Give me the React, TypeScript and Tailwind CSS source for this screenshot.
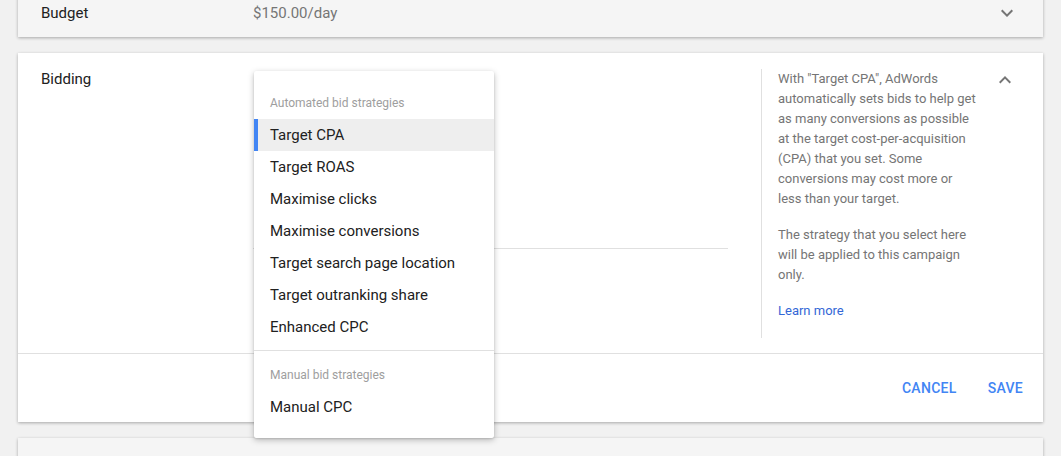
import React from 'react';

const font = { fontFamily: 'Roboto, "Liberation Sans", Arial, sans-serif' };

function Chevron({ up = false }: { up?: boolean }) {
  return (
    <svg width="24" height="24" viewBox="0 0 24 24" className="text-[#757575]" fill="currentColor">
      {up ? (
        <path d="M7.41 15.41L12 10.83l4.59 4.58L18 14l-6-6-6 6z" />
      ) : (
        <path d="M7.41 8.59L12 13.17l4.59-4.58L18 10l-6 6-6-6 1.41-1.41z" />
      )}
    </svg>
  );
}

const automated = [
  'Target CPA',
  'Target ROAS',
  'Maximise clicks',
  'Maximise conversions',
  'Target search page location',
  'Target outranking share',
  'Enhanced CPC',
];

function BidMenu() {
  return (
    <div className="absolute left-[236px] top-[18px] z-10 w-[240px] bg-white pt-2 pb-[15px] rounded-[2px] shadow-[0_2px_6px_rgba(0,0,0,0.25),0_1px_2px_rgba(0,0,0,0.12)]">
      <div className="flex h-10 items-end px-4 pb-2 text-[12px] leading-4 text-[#9e9e9e]">
        Automated bid strategies
      </div>
      {automated.map((label, i) => (
        <div
          key={label}
          className={`flex h-8 items-center px-4 text-[15px] text-[#212121] ${
            i === 0 ? 'border-l-4 border-[#4285f4] bg-[#eeeeee] pl-3' : ''
          }`}
        >
          {label}
        </div>
      ))}
      <div className="mt-[7px] border-t border-[#e0e0e0]" />
      <div className="flex h-10 items-end px-4 pb-2 text-[12px] leading-4 text-[#9e9e9e]">
        Manual bid strategies
      </div>
      <div className="flex h-8 items-center px-4 text-[15px] text-[#212121]">Manual CPC</div>
    </div>
  );
}

export default function App() {
  return (
    <div className="h-[456px] w-full overflow-hidden bg-[#f1f1f1]" style={font}>
      <div className="-mt-[11px] flex flex-col gap-4 px-[18px]">
        {/* Budget (collapsed) */}
        <div className="flex h-[48px] items-center bg-[#f5f5f5] shadow-[0_1px_3px_rgba(0,0,0,0.3)]">
          <div className="w-[235px] pl-[23px] text-[15px] text-[#212121]">Budget</div>
          <div className="flex-1 text-[15px] text-[#757575]">$150.00/day</div>
          <div className="mr-[24px]">
            <Chevron />
          </div>
        </div>

        {/* Bidding (expanded) */}
        <div className="relative bg-white shadow-[0_1px_3px_rgba(0,0,0,0.3)]">
          <div className="flex pt-4 pb-[15px]">
            <div className="w-[235px] pl-[23px] text-[15px] leading-5 text-[#212121]">Bidding</div>
            <div className="w-[475px]">
              <div className="h-[180px] border-b border-[#e0e0e0]" />
            </div>
            <div className="ml-[33px] w-[217px] border-l border-[#e0e0e0] pl-4 pb-[17px] text-[13px] leading-5 text-[#757575]">
              <p>
                With "Target CPA", AdWords automatically sets bids to help get as many conversions as
                possible at the target cost-per-acquisition (CPA) that you set. Some conversions may
                cost more or less than your target.
              </p>
              <p className="mt-4">
                The strategy that you select here will be applied to this campaign only.
              </p>
              <p className="mt-4 text-[#3367d6]">Learn more</p>
            </div>
            <div className="ml-[15px] -mt-[1px]">
              <Chevron up />
            </div>
          </div>
          <div className="flex h-[69px] items-center justify-end gap-[31px] border-t border-[#e0e0e0] pr-[20px] text-[14px] font-medium tracking-[0.3px] text-[#4285f4]">
            <span>CANCEL</span>
            <span>SAVE</span>
          </div>
          <BidMenu />
        </div>

        {/* Next card (collapsed) */}
        <div className="h-[48px] bg-[#f5f5f5] shadow-[0_1px_3px_rgba(0,0,0,0.3)]" />
      </div>
    </div>
  );
}
